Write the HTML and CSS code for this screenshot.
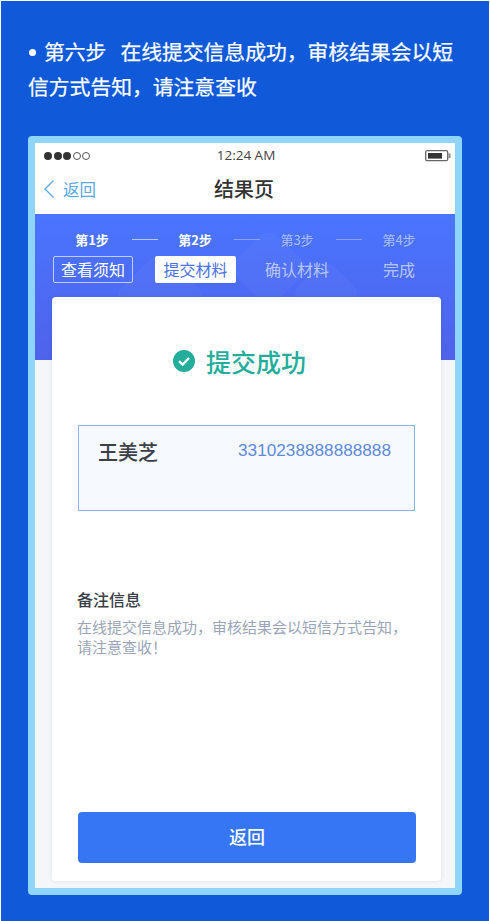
FILE: index.html
```html
<!DOCTYPE html>
<html lang="zh-CN">
<head>
<meta charset="utf-8">
<title>第六步</title>
<link rel="stylesheet" href="styles.css">
</head>
<body>
<main class="page">
  <div class="intro">
    <div class="intro-line"><span class="dot"></span><span class="lead">第六步</span><span>在线提交信息成功，审核结果会以短</span></div>
    <div class="intro-line">信方式告知，请注意查收</div>
  </div>
  <section class="phone">
    <div class="status">
      <div class="signal"><i></i><i></i><i></i><i class="off"></i><i class="off"></i></div>
      <div class="time">12:24 AM</div>
      <svg class="battery" width="26" height="12" viewBox="0 0 26 12"><rect x="0.7" y="0.7" width="22" height="10" rx="1.5" fill="none" stroke="#666" stroke-width="1.3"/><rect x="3" y="3" width="14" height="5.6" fill="#333"/><rect x="23.5" y="3.5" width="2" height="4.5" fill="#888"/></svg>
    </div>
    <div class="nav">
      <div class="back">
        <svg width="12" height="20" viewBox="0 0 12 20"><path d="M10.5 1.5 2 10l8.5 8.5" fill="none" stroke="#5aa8e6" stroke-width="1.3"/></svg>
        <span>返回</span>
      </div>
      <div class="title">结果页</div>
    </div>
    <div class="hero">
      <svg class="blobs" width="420" height="146" viewBox="0 0 420 146"><rect x="90" y="50" width="70" height="70" rx="16" transform="rotate(45 125 85)" fill="#fff" fill-opacity=".03"/><rect x="205" y="25" width="58" height="58" rx="14" transform="rotate(45 234 54)" fill="#fff" fill-opacity=".03"/><rect x="265" y="55" width="52" height="52" rx="14" transform="rotate(45 291 81)" fill="#fff" fill-opacity=".03"/></svg>
      <div class="steps">
        <span class="step on">第1步</span><span class="line"></span>
        <span class="step on">第2步</span><span class="line dim"></span>
        <span class="step">第3步</span><span class="line dim"></span>
        <span class="step">第4步</span>
      </div>
      <div class="tabs">
        <span class="tab outlined">查看须知</span>
        <span class="tab active">提交材料</span>
        <span class="tab">确认材料</span>
        <span class="tab">完成</span>
      </div>
    </div>
    <div class="card">
      <div class="result">
        <svg width="22" height="22" viewBox="0 0 22 22"><circle cx="11" cy="11" r="11" fill="#23ae9b"/><path d="M6 11.2l3.6 3.4L16 8" fill="none" stroke="#fff" stroke-width="2.4"/></svg>
        <span>提交成功</span>
      </div>
      <div class="person">
        <span class="name">王美芝</span>
        <span class="id">3310238888888888</span>
      </div>
      <h2 class="note-title">备注信息</h2>
      <p class="note">在线提交信息成功，审核结果会以短信方式告知，<br>请注意查收！</p>
      <button class="submit">返回</button>
    </div>
  </section>
</main>
</body>
</html>
```

FILE: styles.css
```css
* { box-sizing: border-box; }
html, body { margin: 0; padding: 0; }
body { width: 490px; height: 921px; overflow: hidden; background: #fff; font-family: "Noto Sans CJK SC", "Liberation Sans", sans-serif; }
.page { margin: 1px 1px 0; height: 920px; background: #1059d9; padding: 33px 26px 0 27px; display: flex; flex-direction: column; }
.intro { height: 102px; color: #fff; font-size: 20.8px; line-height: 35px; font-weight: 400; -webkit-text-stroke: .25px #fff; width: 436px; flex: none; }
.intro-line { white-space: nowrap; }
.dot { display: inline-block; width: 7px; height: 7px; border-radius: 50%; background: #fff; margin: 0 8px 4px 1px; vertical-align: middle; }
.lead { margin-right: 14px; }
.phone { width: 434px; height: 759px; border: 7px solid #8ed4fb; border-radius: 4px; background: #f4f6f9; display: flex; flex-direction: column; }
.status { height: 26px; background: #fff; display: flex; align-items: center; justify-content: space-between; padding: 0 4px 0 9px; position: relative; }
.signal { display: flex; gap: 1.5px; }
.signal i { width: 8px; height: 8px; border-radius: 50%; background: #333; }
.signal i.off { background: #fff; border: 1px solid #555; }
.time { position: absolute; left: 2px; right: 0; text-align: center; font-family: "Open Sans", sans-serif; font-size: 13.5px; color: #444; top: 3px; }
.nav { height: 45px; background: #fff; position: relative; display: flex; align-items: center; padding: 0 0 6px 8px; }
.back { display: flex; align-items: center; gap: 8px; color: #5aa8e6; font-size: 16.5px; }
.title { position: absolute; left: -2px; right: 0; text-align: center; font-size: 20px; font-weight: 500; color: #333; }
.hero { position: relative; height: 146px; margin-bottom: -63px; background: linear-gradient(#4a75ff, #4f62ea); color: #fff; padding-top: 15px; flex: none; }
.blobs { position: absolute; left: 0; top: 0; }
.steps { position: relative; display: flex; align-items: center; padding-left: 40px; height: 20px; }
.step { font-size: 13px; width: 34px; text-align: center; color: rgba(255,255,255,.55); white-space: nowrap; }
.step.on { color: #fff; font-weight: 700; }
.line { width: 26px; height: 1px; margin: 0 20px 0 23px; background: rgba(255,255,255,.6); }
.line.dim { margin-left: 22px; background: rgba(255,255,255,.35); }
.tabs { position: relative; display: flex; margin-top: 7px; padding-left: 18px; height: 27px; }
.tab { width: 80px; height: 27px; line-height: 25px; text-align: center; font-size: 16px; color: rgba(255,255,255,.6); border: 1px solid transparent; border-radius: 2px; margin-right: 22px; white-space: nowrap; }
.tab.outlined { color: #fff; border-color: rgba(255,255,255,.65); }
.tab.active { width: 81px; background: #fff; color: #4a6fe8; margin-right: 21px; }
.tab:last-child { margin: 0; }
.card { position: relative; margin: 0 14px 0 17px; width: 389px; height: 584px; background: #fff; border-radius: 4px; box-shadow: 0 0 4px rgba(40,60,120,.1); padding: 47px 26px 0; flex: none; }
.result { display: flex; align-items: center; justify-content: center; gap: 11px; height: 34px; padding-right: 14px; color: #23ae9b; font-size: 25px; font-weight: 500; }
.person { margin-top: 47px; width: 337px; height: 86px; background: #f6faff; border: 1px solid #8fb0e8; display: flex; justify-content: space-between; padding: 11px 23px 0 19px; }
.name { font-size: 20px; font-weight: 500; color: #3b4048; line-height: 30px; }
.id { font-family: "Liberation Sans", sans-serif; font-size: 17.2px; color: #5f89dc; line-height: 26px; }
.note-title { margin: 77px 0 0 -1px; font-size: 16px; font-weight: 500; color: #3b4048; line-height: 22px; }
.note { margin: 7px 0 0 -1px; font-size: 15px; line-height: 20px; color: #9aa5b8; white-space: nowrap; }
.submit { position: absolute; left: 26px; bottom: 18px; width: 338px; height: 51px; border: 0; border-radius: 4px; background: #3676f5; color: #fff; font: 500 18px "Noto Sans CJK SC", sans-serif; padding: 0 0 4px; }
```
